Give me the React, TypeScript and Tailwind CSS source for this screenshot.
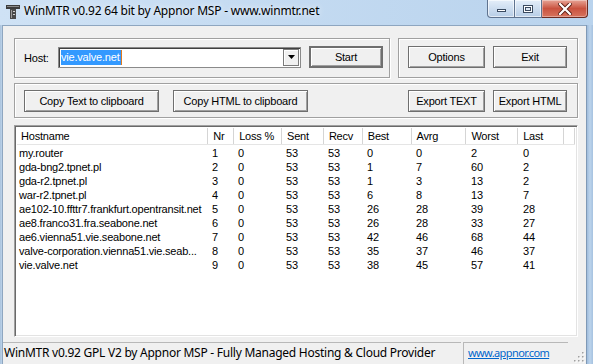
import React from "react";

const rows: string[][] = [
  ["my.router", "1", "0", "53", "53", "0", "0", "2", "0"],
  ["gda-bng2.tpnet.pl", "2", "0", "53", "53", "1", "7", "60", "2"],
  ["gda-r2.tpnet.pl", "3", "0", "53", "53", "1", "3", "13", "2"],
  ["war-r2.tpnet.pl", "4", "0", "53", "53", "6", "8", "13", "7"],
  ["ae102-10.ffttr7.frankfurt.opentransit.net", "5", "0", "53", "53", "26", "28", "39", "28"],
  ["ae8.franco31.fra.seabone.net", "6", "0", "53", "53", "26", "28", "33", "27"],
  ["ae6.vienna51.vie.seabone.net", "7", "0", "53", "53", "42", "46", "68", "44"],
  ["valve-corporation.vienna51.vie.seab...", "8", "0", "53", "53", "35", "37", "46", "37"],
  ["vie.valve.net", "9", "0", "53", "53", "38", "45", "57", "41"],
];

const headers = ["Hostname", "Nr", "Loss %", "Sent", "Recv", "Best", "Avrg", "Worst", "Last"];
const widths = [192, 26, 48, 42, 39, 49, 55, 52, 46];

function Btn({ children, className }: { children: React.ReactNode; className: string }) {
  return (
    <div
      className={`flex items-center justify-center bg-[#f0f0f0] border border-[#6f6f6f] shadow-[inset_1px_1px_0_#ffffff,inset_-1px_-1px_0_#a0a0a0] text-[11px] tracking-[-0.2px] text-black ${className}`}
    >
      {children}
    </div>
  );
}

function Group({ children, className }: { children: React.ReactNode; className: string }) {
  return (
    <div
      className={`flex items-center border border-[#a0a0a0] shadow-[inset_1px_1px_0_#ffffff,1px_1px_0_#ffffff] ${className}`}
    >
      {children}
    </div>
  );
}

export default function App() {
  return (
    <div className="w-[593px] h-[364px] overflow-hidden flex flex-col bg-gradient-to-b from-[#c6dcf2] to-[#b2cde9] font-['Liberation_Sans',Arial,sans-serif] text-black select-none">
      {/* Title bar */}
      <div className="h-[25px] flex items-start relative shrink-0 bg-gradient-to-r from-[#cfe2f5] via-[#c3daf1] to-[#b9d3ed]">
        <div className="w-[16px] h-[16px] ml-[5px] mt-[4px]">
          <svg width="16" height="16" viewBox="0 0 16 16">
            <rect x="1" y="1" width="14" height="4" fill="#3c3c3c" />
            <rect x="2" y="2" width="12" height="1" fill="#8a8a8a" />
            <rect x="5" y="5" width="6" height="10" fill="#4a4a4a" />
            <rect x="6" y="6" width="1" height="8" fill="#9a9a9a" />
            <rect x="8" y="7" width="2" height="1" fill="#d0d0d0" />
            <rect x="8" y="10" width="2" height="1" fill="#d0d0d0" />
          </svg>
        </div>
        <div className="ml-[3px] mt-[3px] text-[12px] tracking-[-0.2px] leading-[16px] font-['Noto_Sans',sans-serif] text-black [text-shadow:0_0_6px_#ffffff]">
          WinMTR v0.92 64 bit by Appnor MSP - www.winmtr.net
        </div>
        <div className="absolute right-[5px] top-0 flex h-[19px]">
          <div className="w-[28px] h-[18px] border border-[#5f738f] border-t-0 rounded-bl-[4px] bg-gradient-to-b from-[#e4eef9] to-[#b7cde6] flex items-center justify-center shadow-[inset_0_0_0_1px_rgba(255,255,255,0.6)]">
            <div className="w-[9px] h-[3px] mt-[3px] bg-white border border-[#3a4a60]" />
          </div>
          <div className="w-[27px] h-[18px] border border-[#5f738f] border-t-0 border-l-0 bg-gradient-to-b from-[#e4eef9] to-[#b7cde6] flex items-center justify-center shadow-[inset_0_0_0_1px_rgba(255,255,255,0.6)]">
            <div className="w-[10px] h-[8px] bg-white border border-[#3a4a60] flex items-center justify-center">
              <div className="w-[6px] h-[4px] border border-[#3a4a60] bg-[#dbe6f3]" />
            </div>
          </div>
          <div className="w-[46px] h-[18px] border border-[#6b2a20] border-t-0 border-l-0 rounded-br-[4px] bg-gradient-to-b from-[#e6a496] via-[#c9523f] to-[#d7735d] flex items-center justify-center shadow-[inset_0_0_0_1px_rgba(255,255,255,0.35)]">
            <svg width="14" height="12" viewBox="0 0 14 12">
              <path d="M2 1 L12 11 M12 1 L2 11" stroke="#5a1d14" strokeWidth="4" strokeLinecap="square" />
              <path d="M2 1 L12 11 M12 1 L2 11" stroke="#ffffff" strokeWidth="2.2" strokeLinecap="square" />
            </svg>
          </div>
        </div>
      </div>

      {/* Body with frames */}
      <div className="flex flex-1 min-h-0">
        <div className="w-[3px] bg-gradient-to-r from-[#a9c2dc] to-[#bcd3ea] border-r border-[#8ea6c0]" />
        <div className="w-[583px] flex flex-col bg-[#f0f0f0] border-t border-[#8ea6c0] pt-[12px] pl-[11px] relative">
          {/* Row 1 */}
          <div className="flex gap-[8px]">
            <Group className="w-[376px] h-[40px]">
              <div className="ml-[9px] text-[11px] tracking-[-0.2px] w-[34px]">Host:</div>
              <div className="w-[243px] h-[21px] -mt-[2px] bg-white border border-[#8a8a8a] shadow-[inset_1px_1px_0_#404040] flex items-center relative">
                <div className="ml-[2px] h-[15px] bg-[#3399ff] text-white text-[11px] tracking-[-0.2px] leading-[15px] pr-[1px]">
                  vie.valve.net
                </div>
                <div className="w-[1px] h-[15px] bg-[#e07a1f]" />
                <div className="absolute right-[1px] top-[1px] w-[16px] h-[17px] bg-[#f0f0f0] border border-[#7a7a7a] shadow-[inset_1px_1px_0_#ffffff] flex items-center justify-center">
                  <svg width="7" height="4" viewBox="0 0 7 4">
                    <path d="M0 0 H7 L3.5 4 Z" fill="#000" />
                  </svg>
                </div>
              </div>
              <Btn className="ml-[8px] -mt-[2px] w-[74px] h-[22px] border-2 border-[#5c5c5c]">Start</Btn>
            </Group>
            <Group className="w-[180px] h-[40px]">
              <Btn className="ml-[9px] -mt-[2px] w-[77px] h-[22px]">Options</Btn>
              <Btn className="ml-[8px] -mt-[2px] w-[74px] h-[22px]">Exit</Btn>
            </Group>
          </div>

          {/* Row 2 */}
          <Group className="mt-[5px] w-[564px] h-[35px]">
            <Btn className="ml-[9px] mt-[1px] w-[135px] h-[22px]">Copy Text to clipboard</Btn>
            <Btn className="ml-[14px] mt-[1px] w-[135px] h-[22px]">Copy HTML to clipboard</Btn>
            <div className="flex-1" />
            <Btn className="mt-[1px] w-[77px] h-[22px]">Export TEXT</Btn>
            <Btn className="ml-[8px] mr-[10px] mt-[1px] w-[74px] h-[22px]">Export HTML</Btn>
          </Group>

          {/* List view */}
          <div className="mt-[7px] w-[564px] h-[212px] bg-white border border-[#a0a0a0] border-r-white border-b-white shadow-[inset_1px_1px_0_#696969,inset_-1px_-1px_0_#e3e3e3] p-[2px]">
            <div className="flex h-[17px] border-b border-[#e5e5e5] bg-white">
              {headers.map((h, i) => (
                <div
                  key={h}
                  style={{ width: widths[i] }}
                  className={`h-full border-r border-[#d5d5d5] text-[11px] tracking-[-0.2px] leading-[16px] ${i === 0 ? "pl-[4px]" : "pl-[5px]"}`}
                >
                  {h}
                </div>
              ))}
              <div className="w-[11px] h-full border-r border-[#d5d5d5]" />
            </div>
            <div className="pt-[1px]">
              {rows.map((r, ri) => (
                <div key={ri} className="flex h-[14px]">
                  {r.map((c, i) => (
                    <div
                      key={i}
                      style={{ width: widths[i] }}
                      className={`text-[11px] tracking-[-0.2px] leading-[14px] whitespace-nowrap overflow-hidden ${i === 0 ? "pl-[2px]" : "pl-[3px]"}`}
                    >
                      {c}
                    </div>
                  ))}
                </div>
              ))}
            </div>
          </div>

          {/* Status bar */}
          <div className="mt-auto -ml-[11px] h-[24px] flex items-end font-['Noto_Sans',sans-serif] text-[12px]">
            <div className="w-[458px] h-[22px] border-t border-[#b8b8b8] pl-[1px] leading-[20px] tracking-[-0.25px] whitespace-nowrap overflow-hidden">
              WinMTR v0.92 GPL V2 by Appnor MSP - Fully Managed Hosting &amp; Cloud Provider
            </div>
            <div className="ml-[2px] w-[105px] h-[22px] border-t border-l border-[#b8b8b8] pl-[4px] leading-[20px] text-[11px] tracking-[-0.6px] text-[#0066cc] underline">
              www.appnor.com
            </div>
            <div className="flex-1 h-[22px] relative">
              <svg className="absolute right-[1px] bottom-[1px]" width="12" height="12" viewBox="0 0 12 12">
                {[
                  [10, 2], [10, 6], [6, 6], [10, 10], [6, 10], [2, 10],
                ].map(([x, y], k) => (
                  <g key={k}>
                    <rect x={x} y={y} width="1.5" height="1.5" fill="#ffffff" />
                    <rect x={x - 1} y={y - 1} width="1.5" height="1.5" fill="#a0a0a0" />
                  </g>
                ))}
              </svg>
            </div>
          </div>
        </div>
        <div className="w-[7px] bg-gradient-to-r from-[#9fbcdc] via-[#bcd4ec] to-[#a6c2e0] border-l border-[#7f99b6]" />
      </div>
    </div>
  );
}
